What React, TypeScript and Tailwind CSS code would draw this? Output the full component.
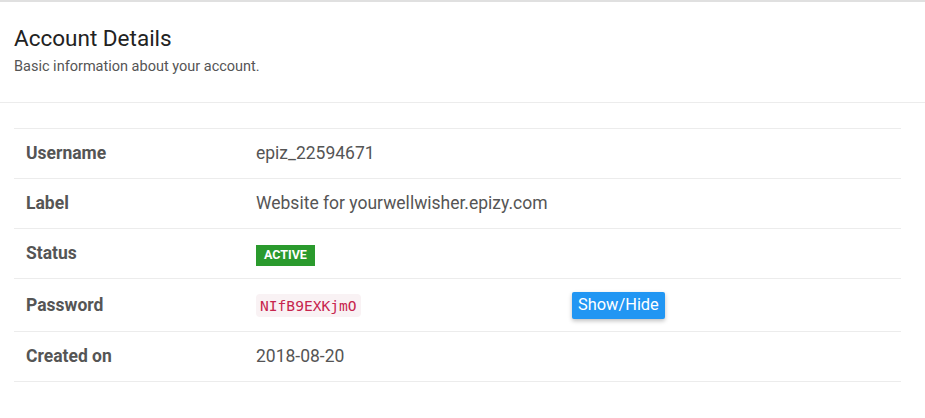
import React, { useState } from 'react';

const rows: { label: string; value: string }[] = [
  { label: 'Username', value: 'epiz_22594671' },
  { label: 'Label', value: 'Website for yourwellwisher.epizy.com' },
];

export default function App() {
  const [showPassword, setShowPassword] = useState(true);

  return (
    <div className="min-h-[418px] w-[925px] bg-white font-['Roboto',sans-serif] text-[#555]">
      <div className="border-t-2 border-[#e0e0e0]">
        {/* Header */}
        <div className="px-[14px] pt-[23px] pb-[25px] border-b border-[#ececec]">
          <h2 className="text-[22.5px] leading-[27px] text-[#222]">Account Details</h2>
          <p className="mt-[5px] text-[14.5px] leading-[20px] text-[#555]">Basic information about your account.</p>
        </div>

        {/* Details table */}
        <div className="mx-[14px] mt-[25px] w-[887px] border-t border-[#ececec]">
          {rows.map((row) => (
            <div key={row.label} className="grid grid-cols-[230px_316px_1fr] h-[50px] items-center border-b border-[#ececec] text-[17.5px]">
              <div className="pl-[12px] font-bold">{row.label}</div>
              <div className="pl-[12px]">{row.value}</div>
              <div />
            </div>
          ))}

          <div className="grid grid-cols-[230px_316px_1fr] h-[50px] items-center border-b border-[#ececec] text-[17.5px]">
            <div className="pl-[12px] font-bold">Status</div>
            <div className="pl-[12px]">
              <span className="inline-flex h-[21px] items-center bg-[#2a9a2d] px-[8px] text-[12.5px] font-bold text-white">
                ACTIVE
              </span>
            </div>
            <div />
          </div>

          <div className="grid grid-cols-[230px_316px_1fr] h-[53px] items-center border-b border-[#ececec] text-[17.5px]">
            <div className="pl-[12px] font-bold">Password</div>
            <div className="pl-[12px]">
              <code className="inline-flex h-[23px] items-center rounded-[4px] bg-[#f9f2f4] px-[4px] font-['DejaVu_Sans_Mono',monospace] text-[14.6px] text-[#c7254e]">
                {showPassword ? 'NIfB9EXKjmO' : '••••••••••••'}
              </code>
            </div>
            <div className="pl-[12px]">
              <button
                onClick={() => setShowPassword(!showPassword)}
                className="h-[27px] rounded-[2px] bg-[#2196f3] px-[6px] text-[16.4px] text-white shadow-[0_2px_4px_rgba(0,0,0,0.25)]"
              >
                Show/Hide
              </button>
            </div>
          </div>

          <div className="grid grid-cols-[230px_316px_1fr] h-[50px] items-center border-b border-[#ececec] text-[17.5px]">
            <div className="pl-[12px] font-bold">Created on</div>
            <div className="pl-[12px]">2018-08-20</div>
            <div />
          </div>
        </div>
      </div>
    </div>
  );
}
